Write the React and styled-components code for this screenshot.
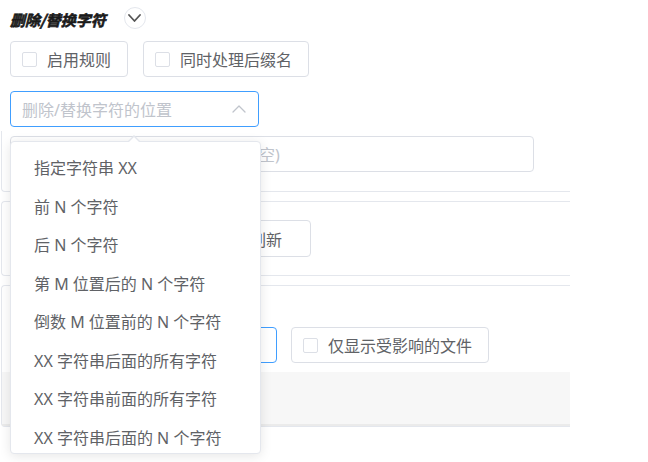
import React from "react";
import styled, { createGlobalStyle } from "styled-components";

const GlobalStyle = createGlobalStyle`
  html, body { margin: 0; padding: 0; background: #ffffff; }
  body {
    font-family: "Noto Sans", "Noto Sans CJK SC", sans-serif;
    color: #606266;
    -webkit-font-smoothing: antialiased;
  }
`;

const Page = styled.div`
  position: relative;
  width: 569px;
  height: 462px;
  margin-left: 1px;
  overflow: hidden;
`;

const Header = styled.div`
  display: flex;
  flex-direction: column;
  padding: 7px 0 0 9px;
`;

const TitleRow = styled.div`
  display: flex;
  align-items: center;
  gap: 18px;
  height: 22px;
`;

const Title = styled.div`
  font-family: "Noto Sans CJK SC", sans-serif;
  font-size: 15px;
  font-weight: 700;
  font-style: italic;
  color: #1a1a1a;
  -webkit-text-stroke: 0.6px #1a1a1a;
  line-height: 22px;
  margin-top: 3px;
`;

const CircleButton = styled.div`
  width: 22px;
  height: 22px;
  box-sizing: border-box;
  border: 1px solid #e4e7ed;
  border-radius: 50%;
  display: flex;
  align-items: center;
  justify-content: center;
  background: #fff;
`;

const Row = styled.div`
  display: flex;
  align-items: center;
  gap: ${(p) => p.$gap || 15}px;
  margin-top: ${(p) => p.$mt || 0}px;
`;

const CheckButton = styled.div`
  height: 36px;
  box-sizing: border-box;
  border: 1px solid #dcdfe6;
  border-radius: 4px;
  display: flex;
  align-items: center;
  padding: 0 16px 0 11px;
  gap: 10px;
  font-size: 16px;
  color: #606266;
  background: #fff;
  white-space: nowrap;
`;

const CheckBox = styled.span`
  width: 15px;
  height: 15px;
  box-sizing: border-box;
  border: 1px solid #dcdfe6;
  border-radius: 2px;
  background: #fff;
  flex: none;
`;

const Field = styled.div`
  width: ${(p) => p.$w}px;
  height: 36px;
  box-sizing: border-box;
  border: 1px solid ${(p) => (p.$focus ? "#409eff" : "#dcdfe6")};
  border-radius: 4px;
  display: flex;
  align-items: center;
  justify-content: space-between;
  padding: 0 12px 0 ${(p) => p.$pl || 11}px;
  font-size: 16px;
  color: #c0c4cc;
  background: #fff;
  white-space: nowrap;
  overflow: hidden;
  flex: none;
`;

const Card = styled.div`
  border: 1px solid #e4e7ed;
  border-right: none;
  border-radius: 4px 0 0 4px;
  margin-top: 9px;
  padding: ${(p) => p.$pad};
  display: flex;
  flex-direction: column;
`;

const TopCard = styled(Card)`
  border-top: none;
  border-radius: 0 0 0 4px;
  margin-top: 4px;
`;

const Button = styled.div`
  align-self: flex-start;
  height: 37px;
  box-sizing: border-box;
  border: 1px solid #dcdfe6;
  border-radius: 4px;
  padding: 0 28px;
  display: flex;
  align-items: center;
  font-size: 16px;
  color: #606266;
  background: #fff;
  white-space: nowrap;
`;

const TableHead = styled.div`
  margin-top: 9px;
  margin-left: -8px;
  height: 54px;
  box-sizing: border-box;
  background: #f7f7f7;
  border-bottom: 2px solid #ebebeb;
`;

const Dropdown = styled.div`
  position: absolute;
  left: 9px;
  top: 141px;
  width: 251px;
  height: 313px;
  box-sizing: border-box;
  border: 1px solid #e4e7ed;
  border-radius: 4px;
  background: #fff;
  box-shadow: 0 2px 12px rgba(0, 0, 0, 0.1);
  z-index: 10;

  &::before,
  &::after {
    content: "";
    position: absolute;
    left: 117px;
    width: 0;
    height: 0;
    border-style: solid;
    border-color: transparent;
  }
  &::before {
    top: -13px;
    border-width: 6px;
    border-bottom-color: #e4e7ed;
  }
  &::after {
    top: -11px;
    border-width: 6px;
    border-bottom-color: #fff;
  }
`;

const OptionList = styled.ul`
  list-style: none;
  margin: 0;
  padding: 7px 0 0;
  height: 100%;
  box-sizing: border-box;
  overflow: hidden;
  border-radius: 4px;
`;

const Option = styled.li`
  height: 38.5px;
  line-height: 38.5px;
  padding: 0 0 0 23px;
  font-size: 16px;
  color: #606266;
  white-space: nowrap;
`;

const Chevron = ({ dir = "down", color = "#606266", w = 12, h = 7, sw = 1.6 }) => (
  <svg width={w} height={h} viewBox={`0 0 ${w} ${h}`} fill="none">
    <polyline
      points={
        dir === "down"
          ? `1,1 ${w / 2},${h - 1} ${w - 1},1`
          : `1,${h - 1} ${w / 2},1 ${w - 1},${h - 1}`
      }
      stroke={color}
      strokeWidth={sw}
      strokeLinecap="round"
      strokeLinejoin="round"
    />
  </svg>
);

const options = [
  "指定字符串 XX",
  "前 N 个字符",
  "后 N 个字符",
  "第 M 位置后的 N 个字符",
  "倒数 M 位置前的 N 个字符",
  "XX 字符串后面的所有字符",
  "XX 字符串前面的所有字符",
  "XX 字符串后面的 N 个字符",
  "XX 字符串前面的 N 个字符",
];

export default function App() {
  return (
    <>
      <GlobalStyle />
      <Page>
        <Header>
          <TitleRow>
            <Title>删除/替换字符</Title>
            <CircleButton>
              <Chevron dir="down" color="#555" w={13} h={8} sw={1.8} />
            </CircleButton>
          </TitleRow>
          <Row $mt={12}>
            <CheckButton>
              <CheckBox />
              启用规则
            </CheckButton>
            <CheckButton>
              <CheckBox />
              同时处理后缀名
            </CheckButton>
          </Row>
          <Row $mt={14}>
            <Field $w={249} $focus>
              删除/替换字符的位置
              <Chevron dir="up" color="#c0c4cc" w={14} h={8} sw={1.3} />
            </Field>
          </Row>
        </Header>

        <TopCard $pad="5px 0 19px 8px">
          <Field $w={524} $pl={15}>
            输入替换后的新字符串 (删除则留空)
          </Field>
        </TopCard>

        <Card $pad="18px 0 18px 219px">
          <Button>刷新</Button>
        </Card>

        <Card $pad="41px 0 0 8px">
          <Row $gap={14}>
            <Field $w={267} $focus />
            <CheckButton>
              <CheckBox />
              仅显示受影响的文件
            </CheckButton>
          </Row>
          <TableHead />
        </Card>

        <Dropdown>
          <OptionList>
            {options.map((o) => (
              <Option key={o}>{o}</Option>
            ))}
          </OptionList>
        </Dropdown>
      </Page>
    </>
  );
}
